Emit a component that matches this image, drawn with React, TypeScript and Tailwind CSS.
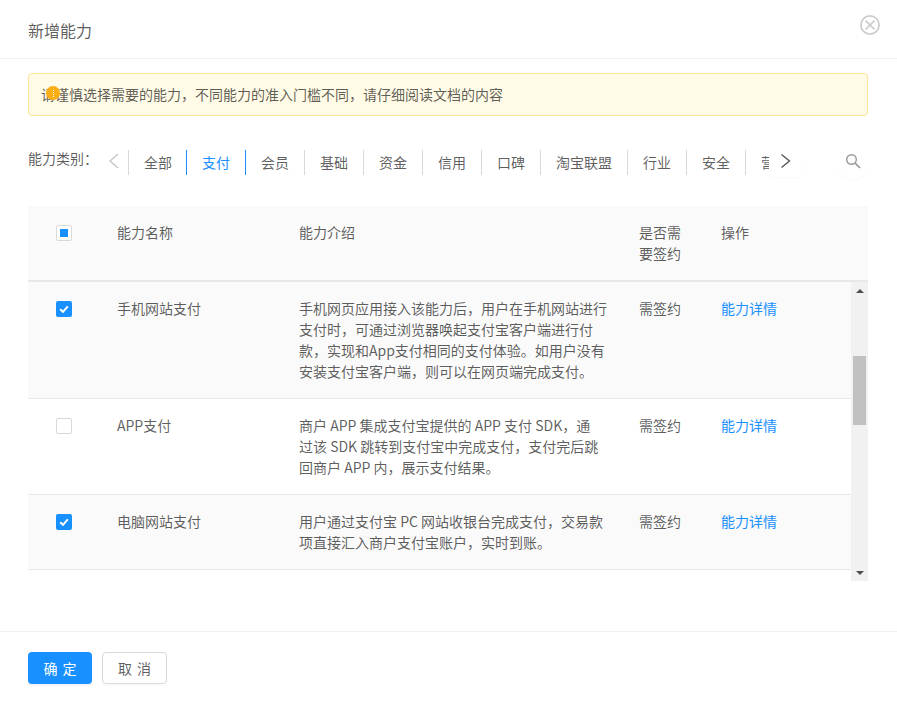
import React from "react";

const tabs = ["全部", "支付", "会员", "基础", "资金", "信用", "口碑", "淘宝联盟", "行业", "安全", "营销"];

const rows = [
  { name: "手机网站支付", checked: true, lines: ["手机网页应用接入该能力后，用户在手机网站进行", "支付时，可通过浏览器唤起支付宝客户端进行付", "款，实现和App支付相同的支付体验。如用户没有", "安装支付宝客户端，则可以在网页端完成支付。"] },
  { name: "APP支付", checked: false, lines: ["商户 APP 集成支付宝提供的 APP 支付 SDK，通", "过该 SDK 跳转到支付宝中完成支付，支付完后跳", "回商户 APP 内，展示支付结果。"] },
  { name: "电脑网站支付", checked: true, lines: ["用户通过支付宝 PC 网站收银台完成支付，交易款", "项直接汇入商户支付宝账户，实时到账。"] },
];

function Check({ checked }: { checked: boolean }) {
  if (checked) {
    return (
      <span className="flex h-4 w-4 items-center justify-center rounded-[2px] bg-[#1890ff]">
        <svg width="12" height="12" viewBox="0 0 12 12" fill="none">
          <path d="M2.2 6.2 L5 8.8 L9.8 3.4" stroke="#fff" strokeWidth="2" />
        </svg>
      </span>
    );
  }
  return <span className="block h-4 w-4 rounded-[2px] border border-[#d9d9d9] bg-white" />;
}

export default function App() {
  return (
    <div className="flex h-[707px] w-[897px] flex-col bg-white font-['Noto_Sans_CJK_SC','Liberation_Sans',sans-serif] text-sm text-[#000000a6]">
      <header className="flex h-[59px] shrink-0 items-start justify-between border-b border-[#f0f0f0] pl-7 pr-[17px]">
        <h1 className="pt-[19px] text-base leading-[22px] text-[#000000a6]">新增能力</h1>
        <svg className="mt-[15px]" width="20" height="20" viewBox="0 0 20 20" fill="none" stroke="#cccccc">
          <circle cx="10" cy="10" r="9.1" strokeWidth="1.7" />
          <path d="M5.6 5.6 L14.4 14.4 M14.4 5.6 L5.6 14.4" strokeWidth="1.6" />
        </svg>
      </header>

      <div className="flex min-h-0 w-[869px] flex-1 flex-col pl-7 pr-px">
        <div className="relative mt-[14px] flex h-[43px] shrink-0 items-center rounded border border-[#ffe58f] bg-[#fffbe6] pb-[2px] pl-[12px] text-sm text-[#000000a6]">
          <span className="absolute left-[17px] top-[12px] flex h-[14px] w-[14px] items-center justify-center rounded-full bg-[#faad14]">
            <span className="h-[7px] w-px border-l border-dotted border-white" />
          </span>
          请谨慎选择需要的能力，不同能力的准入门槛不同，请仔细阅读文档的内容
        </div>

        <div className="mt-[34px] flex h-[27px] shrink-0 items-start">
          <span className="w-[79px] shrink-0 text-sm leading-[16px] text-[#000000a6]">能力类别：</span>
          <svg className="mt-[3px] shrink-0" width="13" height="16" viewBox="0 0 13 16" fill="none" stroke="#c4c4c4" strokeWidth="1.3">
            <path d="M11 1 L3 8 L11 15" />
          </svg>
          <div className="ml-[8px] flex h-[25px] min-w-0 flex-1 overflow-hidden border-l border-[#d9d9d9]">
            {tabs.map((t, i) => (
              <span
                key={t}
                className={
                  i === 0
                    ? "shrink-0 border-r border-[#1890ff] pl-[15px] pr-[14px] text-[14px] leading-[25px] text-[#000000a6]"
                    : i === 1
                    ? "shrink-0 border-r border-[#1890ff] px-[15px] text-[14px] leading-[25px] text-[#1890ff]"
                    : "shrink-0 border-r border-[#d9d9d9] px-[15px] text-[14px] leading-[25px] text-[#000000a6]"
                }
              >
                {t}
              </span>
            ))}
          </div>
          <div className="flex h-[27px] w-[34px] shrink-0 items-center justify-center rounded-[6px] bg-white pb-[5px] pr-[2px] shadow-[0_1px_2px_#00000008]">
            <svg width="11" height="16" viewBox="0 0 11 16" fill="none" stroke="#555" strokeWidth="1.4">
              <path d="M1.5 1.5 L9.5 8 L1.5 14.5" />
            </svg>
          </div>
          <div className="ml-[35px] flex h-[29px] w-[30px] shrink-0 items-center justify-center rounded-full bg-white pb-[7px] pr-[1px] shadow-[0_1px_2px_#00000008]">
            <svg width="16" height="16" viewBox="0 0 16 16" fill="none" stroke="#999" strokeWidth="1.4">
              <circle cx="6.5" cy="6.5" r="4.8" />
              <path d="M10 10 L15 15" strokeWidth="1.7" />
            </svg>
          </div>
        </div>

        <div className="mt-[29px] flex h-[76px] shrink-0 border-b-2 border-[#e8e8e8] bg-[#fafafa] pt-[16px] leading-[21px]">
          <div className="w-[89px] shrink-0 pl-7 pt-[3px]">
            <span className="flex h-4 w-4 items-center justify-center rounded-[2px] border border-[#d9d9d9] bg-white">
              <span className="h-2 w-2 bg-[#1890ff]" />
            </span>
          </div>
          <div className="w-[182px] shrink-0">能力名称</div>
          <div className="w-[340px] shrink-0">能力介绍</div>
          <div className="w-[82px] shrink-0">
            是否需
            <br />
            要签约
          </div>
          <div>操作</div>
        </div>

        <div className="flex h-[299px] shrink-0">
          <div className="min-w-0 flex-1">
            {rows.map((r) => (
              <div
                key={r.name}
                className={
                  r.checked
                    ? "flex border-b border-[#e8e8e8] bg-[#fafafa] py-4 leading-[21px]"
                    : "flex border-b border-[#e8e8e8] bg-white py-4 leading-[21px]"
                }
              >
                <div className="w-[89px] shrink-0 pl-7 pt-[3px]">
                  <Check checked={r.checked} />
                </div>
                <div className="w-[182px] shrink-0">{r.name}</div>
                <div className="w-[340px] shrink-0">
                  {r.lines.map((l) => (
                    <div key={l} className="whitespace-nowrap">{l}</div>
                  ))}
                </div>
                <div className="w-[82px] shrink-0">需签约</div>
                <div className="text-[#1890ff]">能力详情</div>
              </div>
            ))}
          </div>
          <div className="flex w-[17px] shrink-0 flex-col bg-[#f1f1f1]">
            <div className="flex h-[17px] shrink-0 items-center justify-center">
              <span className="h-0 w-0 border-x-[4px] border-b-[4px] border-x-transparent border-b-[#505050]" />
            </div>
            <div className="mx-[2px] mt-[57px] h-[69px] shrink-0 bg-[#c1c1c1]" />
            <div className="flex-1" />
            <div className="flex h-[17px] shrink-0 items-center justify-center">
              <span className="h-0 w-0 border-x-[4px] border-t-[4px] border-x-transparent border-t-[#505050]" />
            </div>
          </div>
        </div>
      </div>

      <footer className="flex h-[76px] shrink-0 gap-[10px] border-t border-[#f0f0f0] pl-7 pt-5">
        <button className="h-8 w-16 rounded bg-[#1890ff] text-sm text-white [word-spacing:2px] shadow-[0_2px_0_#0000000b]">确 定</button>
        <button className="h-8 w-[65px] rounded border border-[#d9d9d9] bg-white text-sm text-[#000000a6] [word-spacing:2px] shadow-[0_2px_0_#00000005]">取 消</button>
      </footer>
    </div>
  );
}
